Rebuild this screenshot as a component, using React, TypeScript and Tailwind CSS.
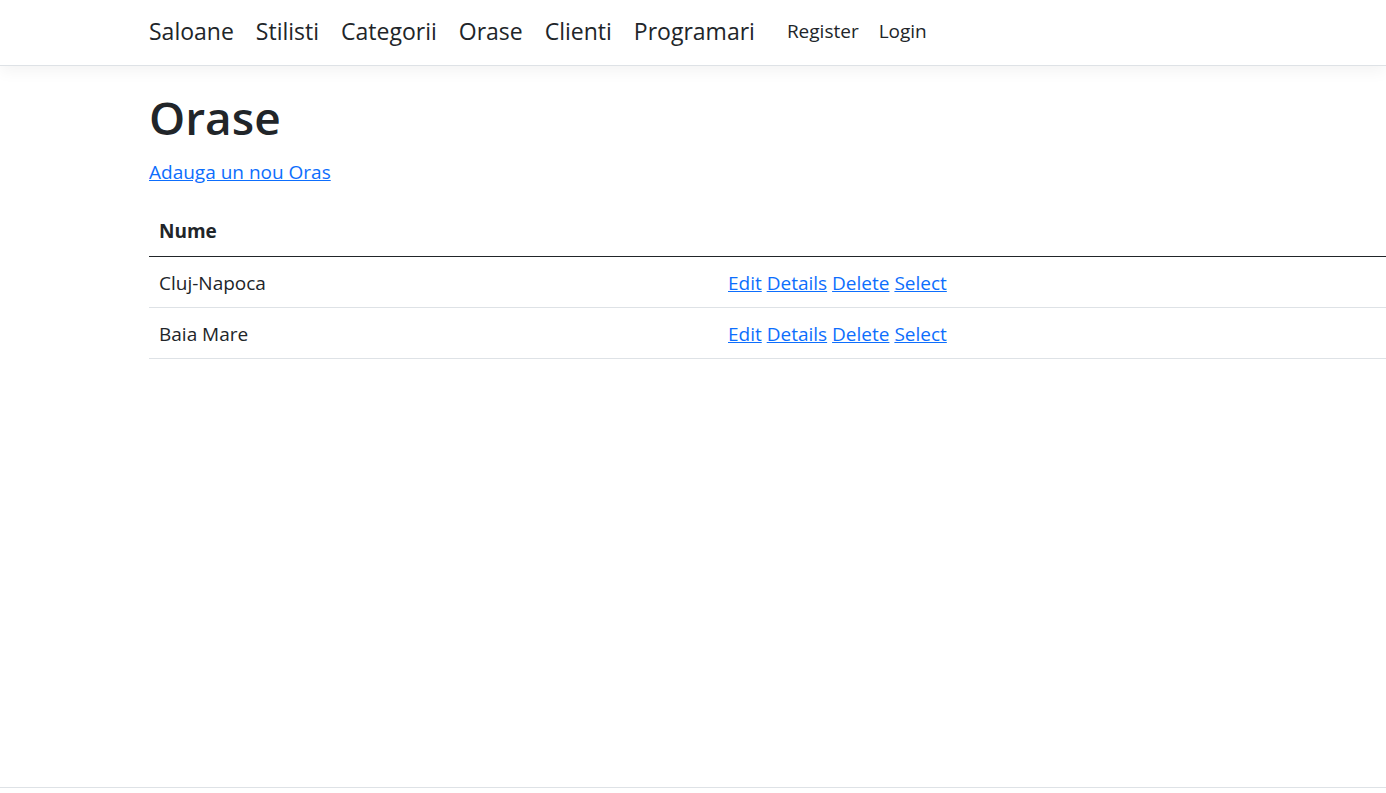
import React from 'react';

const mainLinks = ['Saloane', 'Stilisti', 'Categorii', 'Orase', 'Clienti', 'Programari'];
const orase = ['Cluj-Napoca', 'Baia Mare'];

export default function App() {
  return (
    <div className="flex h-screen flex-col bg-white text-[#212529]" style={{ fontFamily: '"Open Sans", sans-serif' }}>
      <header className="h-[66px] shrink-0 border-b border-[#dee2e6] bg-white shadow-[0_5px_15px_rgba(0,0,0,0.05)]">
        <nav className="flex h-full items-center pb-[2px] pl-[149px]">
          <ul className="flex items-center gap-[22px]">
            {mainLinks.map((l) => (
              <li key={l}>
                <a href="#" className="text-[23px] text-[#212529]">{l}</a>
              </li>
            ))}
          </ul>
          <ul className="ml-[32px] flex items-center gap-[20px]">
            <li><a href="#" className="text-[19px] text-[#212529]">Register</a></li>
            <li><a href="#" className="text-[19px] text-[#212529]">Login</a></li>
          </ul>
        </nav>
      </header>

      <main className="flex-1 pl-[149px] pt-[21px]">
        <h1 className="text-[46px] font-semibold leading-[60px]">Orase</h1>
        <p className="mt-[10px] mb-[18px] leading-[30px]">
          <a href="#" className="text-[19px] text-[#0d6efd] underline">Adauga un nou Oras</a>
        </p>
        <table className="w-full border-collapse text-[19px]">
          <thead>
            <tr className="border-b border-[#212529]">
              <th className="w-[579px] px-[10px] py-[10px] text-left font-bold leading-[30px]">Nume</th>
              <th className="px-[10px] py-[10px]"></th>
            </tr>
          </thead>
          <tbody>
            {orase.map((o) => (
              <tr key={o} className="border-b border-[#dee2e6]">
                <td className="px-[10px] pt-[11px] pb-[9px] leading-[30px]">{o}</td>
                <td className="px-0 pt-[11px] pb-[9px] leading-[30px]">
                  <a href="#" className="text-[#0d6efd] underline">Edit</a>{' '}
                  <a href="#" className="text-[#0d6efd] underline">Details</a>{' '}
                  <a href="#" className="text-[#0d6efd] underline">Delete</a>{' '}
                  <a href="#" className="text-[#0d6efd] underline">Select</a>
                </td>
              </tr>
            ))}
          </tbody>
        </table>
      </main>

      <footer className="h-[6px] shrink-0 border-t border-[#dee2e6]"></footer>
    </div>
  );
}
